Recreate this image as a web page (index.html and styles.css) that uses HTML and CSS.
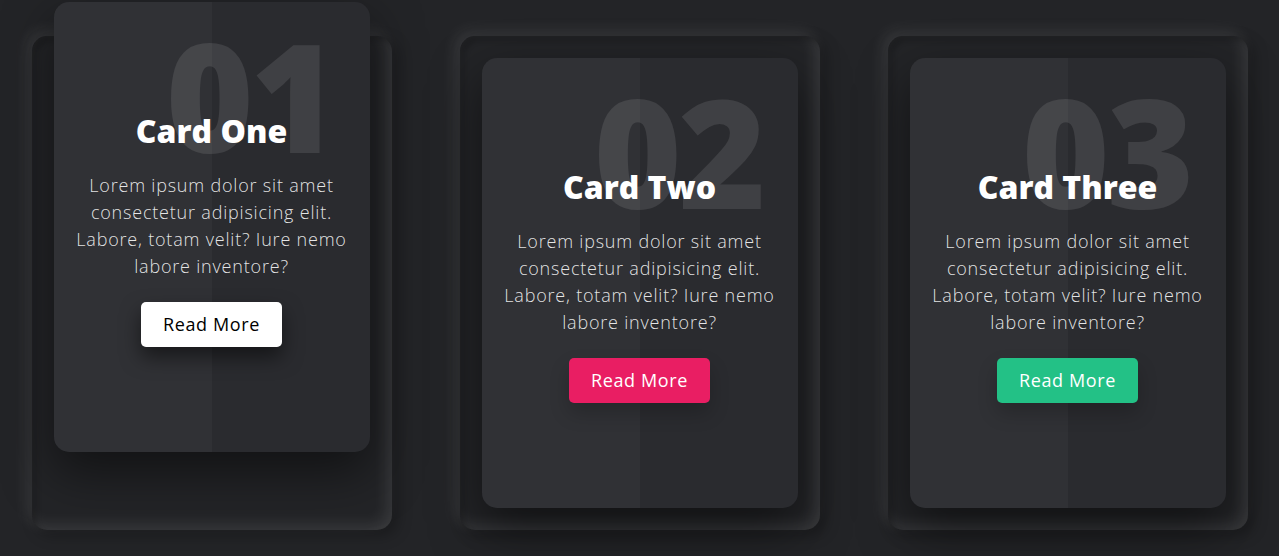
FILE: index.html
```html
<!DOCTYPE html>
<html lang="en">
<head>
    <meta charset="UTF-8">
    <meta name="viewport" content="width=device-width, initial-scale=1.0">
    <title>Neumorphism Cards</title>
    <link rel="stylesheet" href="styles.css">
</head>

<body>
<div class="container">
    <div class="card card-one">
        <div class="box">
            <div class="content">
                <h2>01</h2>
                <h3>Card One</h3>
                <p>Lorem ipsum dolor sit amet consectetur adipisicing elit. Labore, totam velit? Iure nemo labore inventore?</p>
                <a href="#">Read More</a>
            </div>
        </div>
    </div>

    <div class="card card-two">
        <div class="box">
            <div class="content">
                <h2>02</h2>
                <h3>Card Two</h3>
                <p>Lorem ipsum dolor sit amet consectetur adipisicing elit. Labore, totam velit? Iure nemo labore inventore?</p>
                <a href="#">Read More</a>
            </div>
        </div>
    </div>

    <div class="card card-three">
        <div class="box">
            <div class="content">
                <h2>03</h2>
                <h3>Card Three</h3>
                <p>Lorem ipsum dolor sit amet consectetur adipisicing elit. Labore, totam velit? Iure nemo labore inventore?</p>
                <a href="#">Read More</a>
            </div>
        </div>
    </div>
</div>
</body>
</html>
```

FILE: styles.css
```css
* {
    margin: 0;
    padding: 0;
    box-sizing: border-box;
}

body {
    font-family: "Open Sans", "Liberation Sans", sans-serif;
    background-color: #232427;
    min-height: 100vh;
}

.container {
    display: flex;
    justify-content: center;
    gap: 68px;
    padding-top: 36px;
}

.card {
    position: relative;
    width: 360px;
    height: 494px;
    padding: 22px;
    border-radius: 15px;
    box-shadow: inset 5px 5px 5px rgba(0, 0, 0, 0.2),
                inset -5px -5px 15px rgba(255, 255, 255, 0.1),
                5px 5px 15px rgba(0, 0, 0, 0.3),
                -5px -5px 15px rgba(255, 255, 255, 0.1);
}

.box {
    position: relative;
    height: 100%;
    background-color: #2a2b2f;
    border-radius: 15px;
    box-shadow: 0 20px 50px rgba(0, 0, 0, 0.5);
    display: flex;
    justify-content: center;
    align-items: center;
}

.box::before {
    content: '';
    position: absolute;
    top: 0;
    left: 0;
    width: 50%;
    height: 100%;
    border-radius: 15px 0 0 15px;
    background: rgba(255, 255, 255, 0.03);
    pointer-events: none;
}

.card-one .box {
    transform: translateY(-56px);
}

.content {
    padding: 0 16px;
    text-align: center;
}

.content h2 {
    position: absolute;
    top: 18px;
    right: 34px;
    font-size: 150px;
    font-weight: 800;
    line-height: 1;
    color: rgba(255, 255, 255, 0.1);
    letter-spacing: -3px;
}

.content h3 {
    position: relative;
    font-size: 32px;
    font-weight: 800;
    line-height: 48px;
    color: #fff;
    margin-bottom: 17px;
}

.content p {
    position: relative;
    font-size: 18px;
    font-weight: 300;
    line-height: 27px;
    letter-spacing: 0.8px;
    color: rgba(255, 255, 255, 0.88);
    margin-bottom: 22px;
}

.content a {
    position: relative;
    display: inline-block;
    padding: 9px 22px;
    font-size: 18px;
    line-height: 27px;
    letter-spacing: 0.6px;
    color: #fff;
    text-decoration: none;
    border-radius: 5px;
    box-shadow: 0 10px 20px rgba(0, 0, 0, 0.2);
}

.card-one .content a {
    background-color: #fff;
    color: #000;
    box-shadow: 0 10px 20px rgba(0, 0, 0, 0.5);
}

.card-two .content a {
    background-color: #e91e63;
}

.card-three .content a {
    background-color: #23c186;
}
```
